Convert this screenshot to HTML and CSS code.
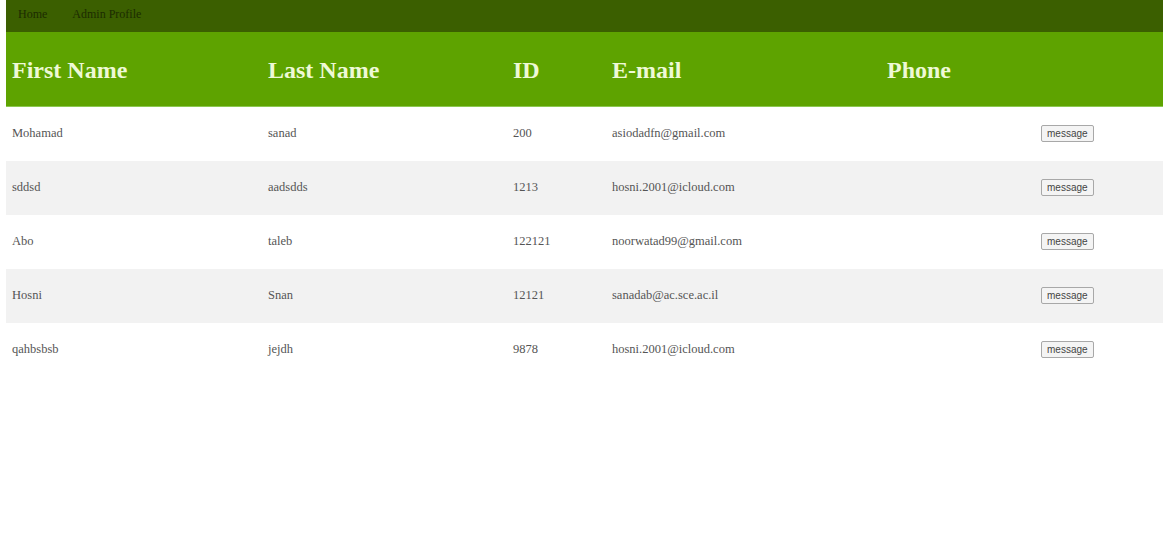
FILE: index.html
```html
<!DOCTYPE html>
<html>
<head>
<meta charset="utf-8">
<link rel="stylesheet" href="styles.css">
</head>
<body>
<div class="page">
  <nav class="topnav">
    <a class="navlink" href="#">Home</a>
    <a class="navlink" href="#">Admin Profile</a>
  </nav>
  <table class="users">
    <colgroup>
      <col class="c1"><col class="c2"><col class="c3"><col class="c4"><col class="c5"><col class="c6">
    </colgroup>
    <thead>
      <tr>
        <th>First Name</th><th>Last Name</th><th>ID</th><th>E-mail</th><th>Phone</th><th></th>
      </tr>
    </thead>
    <tbody>
      <tr><td>Mohamad</td><td>sanad</td><td>200</td><td>asiodadfn@gmail.com</td><td></td><td><button class="msg">message</button></td></tr>
      <tr><td>sddsd</td><td>aadsdds</td><td>1213</td><td>hosni.2001@icloud.com</td><td></td><td><button class="msg">message</button></td></tr>
      <tr><td>Abo</td><td>taleb</td><td>122121</td><td>noorwatad99@gmail.com</td><td></td><td><button class="msg">message</button></td></tr>
      <tr><td>Hosni</td><td>Snan</td><td>12121</td><td>sanadab@ac.sce.ac.il</td><td></td><td><button class="msg">message</button></td></tr>
      <tr><td>qahbsbsb</td><td>jejdh</td><td>9878</td><td>hosni.2001@icloud.com</td><td></td><td><button class="msg">message</button></td></tr>
    </tbody>
  </table>
</div>
</body>
</html>
```
FILE: styles.css
```css
html, body {
  margin: 0;
  padding: 0;
  background: #ffffff;
}
body {
  font-family: "Liberation Serif", "Times New Roman", serif;
}
.page {
  margin: 0 7px 0 6px;
}
.topnav {
  height: 32px;
  background: #3b5f00;
  display: flex;
  align-items: center;
  gap: 25px;
  padding-left: 12px;
  box-sizing: border-box;
}
.navlink {
  color: #1c2c00;
  text-decoration: none;
  font-size: 12px;
  position: relative;
  top: -2px;
}
.users {
  width: 100%;
  border-collapse: collapse;
  table-layout: fixed;
}
.c1 { width: 256px; }
.c2 { width: 245px; }
.c3 { width: 99px; }
.c4 { width: 275px; }
.c5 { width: 154px; }
.c6 { width: 128px; }
.users th {
  background: #5ea300;
  color: #eef9d6;
  font-size: 24px;
  font-weight: bold;
  text-align: left;
  height: 74px;
  padding: 4px 6px 0;
  box-sizing: border-box;
  border-bottom: 1px solid #8cc850;
}
.users td {
  height: 54px;
  padding: 0 6px;
  font-size: 12.5px;
  color: #555555;
  vertical-align: middle;
}
.users tbody tr:nth-child(even) td {
  background: #f2f2f2;
}
.msg {
  font-family: "Liberation Sans", Arial, sans-serif;
  font-size: 10px;
  color: #444;
  background: #f4f4f4;
  border: 1px solid #a8a8a8;
  border-radius: 2px;
  padding: 1px 5px;
  height: 17px;
  line-height: 13px;
}
```
